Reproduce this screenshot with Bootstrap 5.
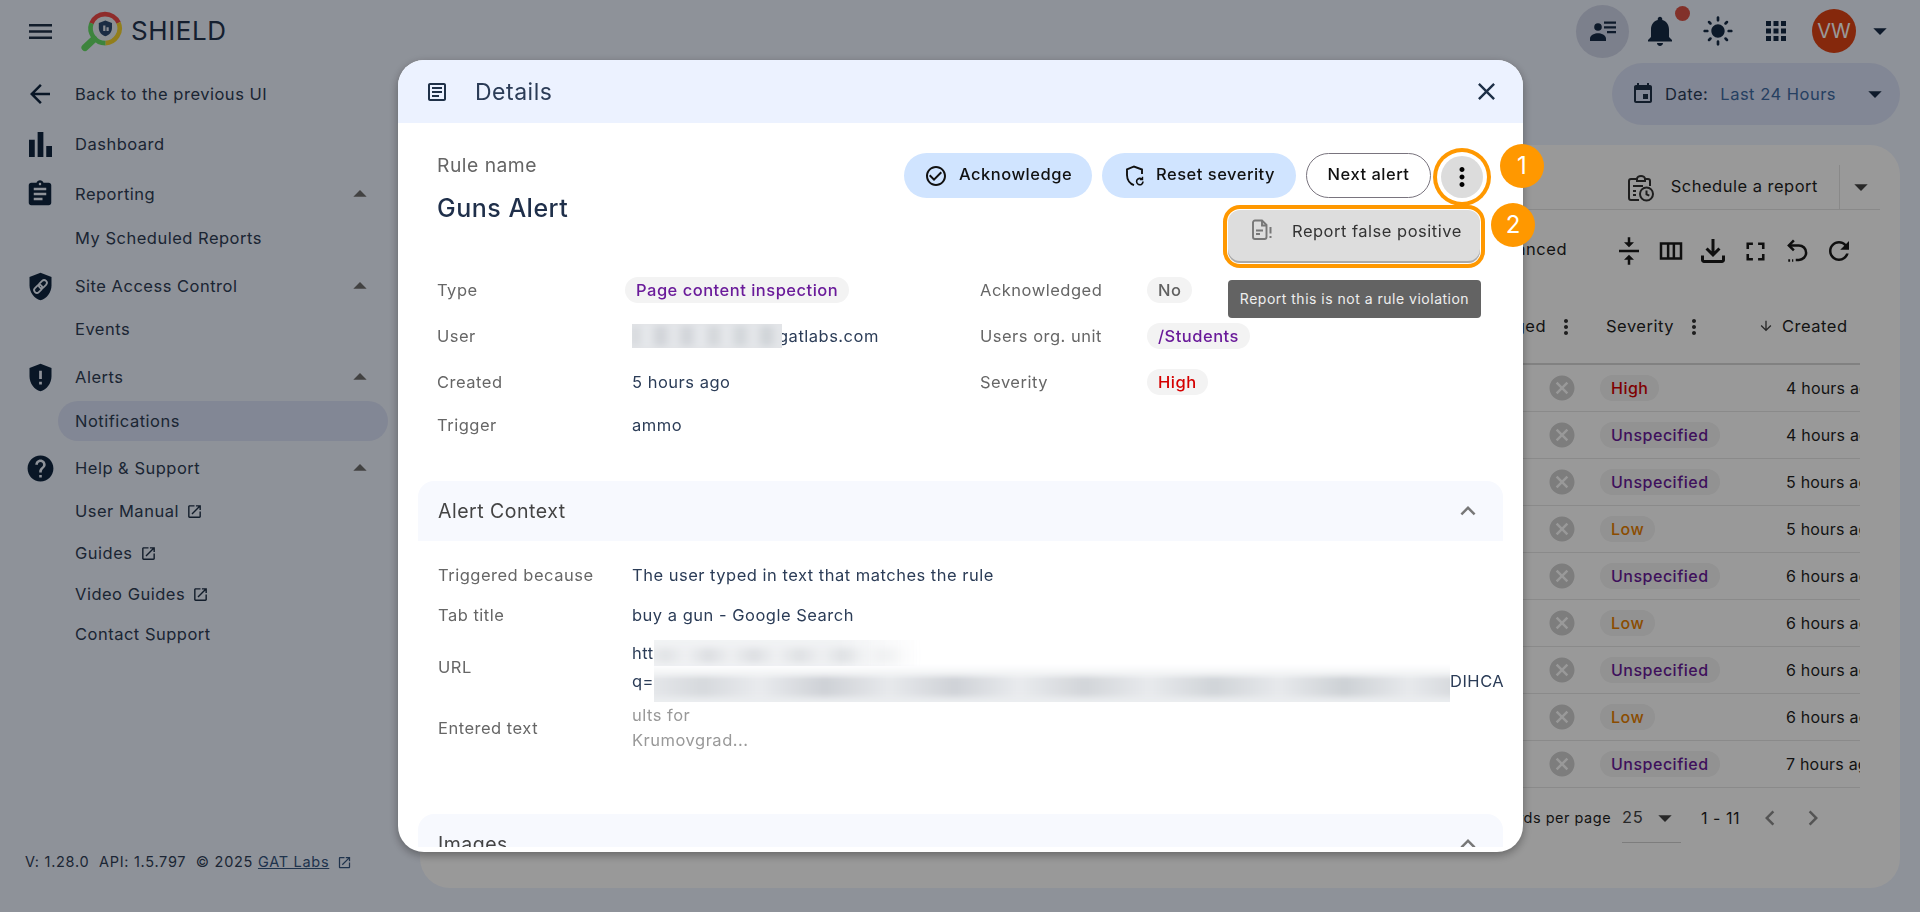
<!DOCTYPE html>
<html lang="en">
<head>
<meta charset="utf-8">
<title>SHIELD - Details</title>
<link href="https://cdn.jsdelivr.net/npm/bootstrap@5.3.0/dist/css/bootstrap.min.css" rel="stylesheet">
<style>
html,body{height:912px;overflow:hidden}
body{font-family:Inter,"Liberation Sans",sans-serif;font-size:16.5px;letter-spacing:.5px;background:#edf3ff;color:#2b3c57}
.ic{fill:currentColor;flex:none;display:block}
.shell{height:912px}
.topbar{height:62px;padding-right:24px;flex:none}
.burger{width:40px;margin-left:20px;color:#1f3148}
.logo{margin-left:18.5px;flex:none}
.brand{font-size:26px;letter-spacing:.6px;color:#24344f;margin-left:8.5px;line-height:1}
.prof{width:53px;height:53px;border-radius:50%;background:#cfd5e9;color:#182c49;margin-right:8px}
.bellb{width:46px;position:relative;color:#152a45}
.dotred{position:absolute;top:-7px;right:-7px;width:15px;height:15px;border-radius:50%;background:#d95347}
.sunb{width:32px;color:#152a45;margin-left:19px}
.gridb{width:30px;color:#152a45;margin-left:27px}
.avatar{width:44px;height:44px;border-radius:50%;background:#de4314;color:#fff;font-size:20px;letter-spacing:0;margin-left:21px}
.cr-top{color:#182c49;margin-left:8px}
.content{min-height:0}
.side{width:420px;padding-top:10px}
.grp{margin-bottom:5px}
.grp-one{margin-bottom:6px}
.nv-main,.nv-sub{display:flex;align-items:center;color:#2f3e56}
.nv-main{height:44px}
.nv-sub{height:42px;padding-left:75px;position:relative}
.nv-sub.short{height:40px}
.nv-sub.first{margin-top:1px}
.nv-ico{width:40px;margin-left:20px;margin-right:15px;display:flex;justify-content:center;color:#0f2640}
.nv-cr{margin-left:auto;margin-right:44px;color:#6f6f6f}
.nv-on{background:#d9e1f8;border-radius:21px;width:330px;margin-left:58px;padding-left:17px;height:40px;margin-top:2px}
.ext{color:#1f3148;margin-left:7px}
.foot{margin-top:auto;padding:0 0 42px 25px;font-size:14.5px;letter-spacing:.72px;color:#303f57;line-height:1;white-space:nowrap}
.foot a{color:#35557f}
.foot .ex2{color:#35557f}
.main-col{min-width:0;padding:1px 20px 24px 0}
.datep{width:288px;height:62px;border-radius:31px;background:#d9e1f8;padding-left:19px}
.datep .cal{color:#1f3148;margin-right:10px}
.datep .lbl{color:#2b3c57;margin-right:12px;font-weight:400}
.datep .val{color:#3f6ba3}
.datep .cr{color:#182c49;margin-left:auto;margin-right:9px}
.sheet{background:#fff;border-radius:30px;margin-top:20px;padding:20px 20px 0;color:#1f1f1f;min-height:0}
.sch{height:45px;border-bottom:1px solid #e4e4e4;flex:none}
.sch-t{margin-top:-2px}
.sch-ic{color:#333;margin-right:17px;margin-top:2px;flex:none}
.sch-div{width:1px;height:45px;background:#e4e4e4;margin:0 5px 0 21px}
.sch-cr{color:#444;margin-right:3px}
.tools{height:82px;padding-right:20px;color:#1f1f1f}
.tools .adv{margin-right:41px;margin-top:-4px}
.tools .tb{width:42px;display:flex;justify-content:center;color:#1a1a1a}
.tbl-wrap{width:640px;overflow:hidden;margin-right:20px}
.grid-t{table-layout:fixed;border-collapse:collapse;width:640px;margin:0}
.grid-t th,.grid-t td{padding:0;white-space:nowrap;overflow:hidden;vertical-align:middle;font-weight:400;background:transparent;box-shadow:none}
.grid-t td{font-size:16px}
.grid-t td.c-c{letter-spacing:.2px}
.grid-t thead tr{height:72px;border-bottom:2px solid #d8d8d8}
.grid-t tbody tr{height:47px;border-bottom:1px solid #e6e6e6}
.grid-t th.c-a{width:370px;text-align:right;padding-right:12px}
.grid-t td.c-a{text-align:right;padding-right:13px}
.grid-t .c-s{width:160px}
.grid-t td.c-s{padding-left:10px}
.grid-t .c-c{width:110px}
.grid-t td.c-c{padding-left:36px}
.hd{display:inline-flex;align-items:center;padding-bottom:2px}
.x-ic{color:#d0d0d0;display:inline-block;vertical-align:middle}
.chp{display:inline-block;height:26px;line-height:26px;border-radius:13px;padding:0 11px;background:#f3f3f3;font-weight:500;white-space:nowrap}
.v-purple{color:#6a1b9a}
.v-red{color:#d50000}
.v-orange{color:#e87f00}
.v-gray{color:#616161}
.pager{height:60px;padding-right:52px;color:#1f1f1f;flex:none}
.pager .rp{font-size:14.5px;margin-right:11px}
.pager .sz{width:59px;height:52px;border-bottom:1px solid #d0d0d0;margin-bottom:2px;color:#444;margin-right:20px;padding-top:14px}
.pager .sz svg{margin-top:-3px}
.pager .cn{margin-right:15px;font-size:16px}
.pager .ch{color:#8d8d8d;margin-right:13px}
.modal.dlg-wrap{overflow:hidden}
.modal-backdrop.show{opacity:.4}
.dlg{max-width:1125px;width:1125px;margin:60px 0 0 398px;position:relative}
.dlg-box{height:792px;border:0;border-radius:26px;overflow:hidden;box-shadow:0 3px 10px rgba(0,0,0,.35);padding-bottom:5px;background:#fff}
.dlg-head{height:63px;background:#ecf2ff;padding:0 22px 0 27px;color:#1f3148;flex:none}
.dlg-head .t{font-size:23px;letter-spacing:.5px;margin:2px 0 0 26px;color:#2b3c57;font-weight:400}
.dlg-body{min-height:0;overflow:hidden;color:#2b3c57}
.top-s{height:144px;padding:30px 40px 0 39px}
.rl{font-size:19.3px;line-height:24px;color:#666}
.rn{font-size:25px;font-weight:500;margin-top:19px;line-height:24px;color:#1f2f4a}
.bt{height:45px;border-radius:23px;border:0;padding:0 0 3px;letter-spacing:.5px;font-weight:500;color:#111;font-size:16.5px;display:flex;align-items:center;margin-right:2px}
.bt svg{margin-top:3px}
.bt-t{background:#d0e4ff}
.bt-o{background:#fff;border:1px solid #79747e}
.w-a{width:188px}
.w-r{width:194px}
.w-n{width:125px}
.m-a{margin:0 11px 0 20px}
.m-r{margin:0 9px 0 21px}
.kb-w{position:relative;width:42px;height:42px;margin-top:3px}
.kb{width:42px;height:42px;border-radius:50%;background:#dcdcdc;box-shadow:0 0 0 4px #fff,0 0 0 8px #ff9800;color:#000}
.mn{position:absolute;top:54px;right:3px;width:252px;height:53px;background:#ddd;border-radius:12px;outline:4px solid #ff9800;outline-offset:1px;box-shadow:inset 0 -2px 0 #aaa;padding:9px 0 0 22px;z-index:3;color:#333;white-space:nowrap}
.mn .fi{color:#777;margin-right:20px}
.tip{position:absolute;top:124px;right:2px;width:253px;height:38px;background:#636363;border-radius:4px;color:#eee;font-size:14px;z-index:3;text-align:center;line-height:38px;white-space:nowrap}
.dtl{display:grid;grid-template-columns:195px 348px 167px 1fr;grid-template-rows:46px 46px 46px 40px;align-items:center;padding-left:39px}
.lb{color:#666}
.shift{margin-left:-7px}
.blur{display:inline-block;vertical-align:middle;position:relative;overflow:hidden;background:#eceef0}
.blur::before{content:"";position:absolute;left:-8px;right:-8px;top:30%;bottom:12%;filter:blur(3px);background:linear-gradient(90deg,#e6e8eb,#d6d9dd 7%,#e9ebee 14%,#ced1d6 22%,#e7e9ec 30%,#cfd2d7 38%,#e9ebee 46%,#d2d5d9 54%,#e8eaed 62%,#d0d4d8 70%,#e7e9ec 78%,#cdd1d5 86%,#e7e9ec 94%,#d5d8dc)}
.blur.u{width:150px;height:24px;margin-right:-4px;background:#e3e5e8}
.blur.u::before{top:10%;bottom:10%}
.blur.l1{width:268px;height:26px;-webkit-mask-image:linear-gradient(90deg,#000 70%,transparent);opacity:.7}
.blur.l2{width:796px;height:38px;margin-top:4px;-webkit-mask-image:linear-gradient(180deg,transparent,#000 40%)}
.sec{margin:36px 20px 0}
.sec-sp{margin-top:61px}
.sec-h{height:60px;background:#f7f9fe;border-radius:16px 16px 0 0;padding:0 20px;color:#444;font-size:19.5px}
.sec-t{margin-top:2px}
.sec-h .e{color:#777;margin-left:auto}
.sec-b{padding:14px 0 0 20px;display:grid;grid-template-columns:194px 1fr;align-items:center}
.sec-b .h4x{height:40px;display:flex;align-items:center}
.u-l{line-height:28px;white-space:nowrap;height:28px;display:flex;align-items:center;overflow:visible}
.ent{line-height:25px;color:#999}
.num{position:absolute;width:44px;height:44px;border-radius:50%;background:#ff9800;color:#fff;font-size:24px;letter-spacing:0;z-index:5}
.n1{top:84px;left:1102px}
.n2{top:143px;left:1093px}
</style>
</head>
<body>
<svg width="0" height="0" class="d-none">
<symbol id="i-menu" viewBox="3 6 18 12" preserveAspectRatio="none"><path d="M3 18h18v-2H3v2zm0-5h18v-2H3v2zm0-7v2h18V6H3z"/></symbol>
<symbol id="i-back" viewBox="0 0 24 24"><path d="M20 11H7.83l5.59-5.59L12 4l-8 8 8 8 1.41-1.41L7.83 13H20v-2z"/></symbol>
<symbol id="i-bar" viewBox="4 4 16 16" preserveAspectRatio="none"><path d="M4 9h4v11H4zm12 4h4v7h-4zm-6-9h4v16h-4z"/></symbol>
<symbol id="i-asg" viewBox="0 0 24 24"><path d="M19 3h-4.18C14.4 1.84 13.3 1 12 1c-1.3 0-2.4.84-2.82 2H5c-1.1 0-2 .9-2 2v14c0 1.1.9 2 2 2h14c1.1 0 2-.9 2-2V5c0-1.1-.9-2-2-2zm-7 0c.55 0 1 .45 1 1s-.45 1-1 1-1-.45-1-1 .45-1 1-1zm2 14H7v-2h7v2zm3-4H7v-2h10v2zm0-4H7V7h10v2z"/></symbol>
<symbol id="i-alert" viewBox="0 0 24 24"><path d="M12 2 4 5v6.09c0 5.05 3.41 9.76 8 10.91 4.59-1.15 8-5.86 8-10.91V5l-8-3zm1 15h-2v-2h2v2zm0-4h-2V7h2v6z"/></symbol>
<symbol id="i-help" viewBox="0 0 24 24"><path d="M12 2C6.48 2 2 6.48 2 12s4.48 10 10 10 10-4.48 10-10S17.52 2 12 2zm1 17h-2v-2h2v2zm2.07-7.75-.9.92C13.45 12.9 13 13.5 13 15h-2v-.5c0-1.1.45-2.1 1.17-2.83l1.24-1.26c.37-.36.59-.86.59-1.41 0-1.1-.9-2-2-2s-2 .9-2 2H8c0-2.21 1.79-4 4-4s4 1.79 4 4c0 .88-.36 1.68-.93 2.25z"/></symbol>
<symbol id="i-ext" viewBox="0 0 24 24"><path d="M19 19H5V5h7V3H5c-1.11 0-2 .9-2 2v14c0 1.1.89 2 2 2h14c1.1 0 2-.9 2-2v-7h-2v7zM14 3v2h3.59l-9.83 9.83 1.41 1.41L19 6.41V10h2V3h-7z"/></symbol>
<symbol id="i-up" viewBox="0 0 24 24"><path d="m7 14 5-5 5 5z"/></symbol>
<symbol id="i-down" viewBox="0 0 24 24"><path d="m7 10 5 5 5-5z"/></symbol>
<symbol id="i-vert" viewBox="0 0 24 24"><path d="M12 8c1.1 0 2-.9 2-2s-.9-2-2-2-2 .9-2 2 .9 2 2 2zm0 2c-1.1 0-2 .9-2 2s.9 2 2 2 2-.9 2-2-.9-2-2-2zm0 6c-1.1 0-2 .9-2 2s.9 2 2 2 2-.9 2-2-.9-2-2-2z"/></symbol>
<symbol id="i-x" viewBox="0 0 24 24"><path d="M12 2C6.47 2 2 6.47 2 12s4.47 10 10 10 10-4.47 10-10S17.53 2 12 2zm5 13.59L15.59 17 12 13.41 8.41 17 7 15.59 10.59 12 7 8.41 8.41 7 12 10.59 15.59 7 17 8.41 13.41 12 17 15.59z"/></symbol>
<symbol id="i-less" viewBox="0 0 24 24"><path d="m12 8-6 6 1.41 1.41L12 10.83l4.59 4.58L18 14z"/></symbol>
</svg>

<div class="shell d-flex flex-column">
  <header class="topbar d-flex align-items-center">
    <div class="burger d-flex justify-content-center"><svg class="ic" width="23" height="15"><use href="#i-menu"/></svg></div>
    <svg class="logo" width="44" height="44" viewBox="0 0 40 40" fill="none" aria-hidden="true">
      <circle cx="24" cy="17.500" r="11" fill="#eaf0f6"/>
      <path d="M24 10.500l6 2.200v4.300c0 3.700-2.500 6.800-6 7.800-3.500-1-6-4.100-6-7.800v-4.300z" fill="#2c4a70"/>
      <path d="M22 15h2v5h-2zM25 16.500h2v3.500h-2z" fill="#e4eaf2"/>
      <path d="M11.300 13A13.500 13.500 0 0 1 36 12.500" stroke="#ee4a48" stroke-width="4.200"/>
      <path d="M36 12.500A13.500 13.500 0 0 1 24 31" stroke="#f3d230" stroke-width="4.200"/>
      <path d="M24 31A13.500 13.500 0 0 1 11.300 13" stroke="#66dd66" stroke-width="4.200"/>
      <path d="M13.500 27.500 5.500 35" stroke="#66dd66" stroke-width="6.500" stroke-linecap="round"/>
    </svg>
    <div class="brand">SHIELD</div>
    <div class="ms-auto d-flex align-items-center">
      <div class="prof d-flex align-items-center justify-content-center">
        <svg class="ic" width="26" height="20" viewBox="0 0 26 20"><circle cx="8" cy="6" r="3.800"/><path d="M0 20v-2.500C0 14 5 12.300 8 12.300s8 1.700 8 5.200V20zM14 .5h12v2.200H14zM14 5.200h12v2.200H14zM17 10h9v2.200h-9z"/></svg>
      </div>
      <div class="bellb d-flex align-items-center justify-content-center">
        <svg class="ic" width="36" height="36" viewBox="0 0 24 24"><path d="M12 22c1.100 0 2-.9 2-2h-4c0 1.100.89 2 2 2zm6-6v-5c0-3.070-1.640-5.640-4.500-6.320V4c0-.83-.67-1.500-1.500-1.500s-1.500.67-1.500 1.500v.68C7.630 5.360 6 7.920 6 11v5l-2 2v1h16v-1l-2-2z"/></svg>
        <span class="dotred"></span>
      </div>
      <div class="sunb d-flex justify-content-center">
        <svg class="ic" width="32" height="32" viewBox="0 0 24 24"><path d="M12 7c-2.760 0-5 2.240-5 5s2.240 5 5 5 5-2.240 5-5-2.240-5-5-5zM2 13h2c.55 0 1-.45 1-1s-.45-1-1-1H2c-.55 0-1 .45-1 1s.45 1 1 1zm18 0h2c.55 0 1-.45 1-1s-.45-1-1-1h-2c-.55 0-1 .45-1 1s.45 1 1 1zM11 2v2c0 .55.45 1 1 1s1-.45 1-1V2c0-.55-.45-1-1-1s-1 .45-1 1zm0 18v2c0 .55.45 1 1 1s1-.45 1-1v-2c0-.55-.45-1-1-1s-1 .45-1 1zM5.990 4.580a.996.996 0 0 0-1.410 0 .996.996 0 0 0 0 1.410l1.060 1.060c.39.39 1.030.39 1.410 0s.39-1.030 0-1.410L5.990 4.580zm12.370 12.370a.996.996 0 0 0-1.410 0 .996.996 0 0 0 0 1.410l1.060 1.060c.39.39 1.030.39 1.410 0a.996.996 0 0 0 0-1.410l-1.060-1.060zm1.060-10.960a.996.996 0 0 0 0-1.410.996.996 0 0 0-1.410 0l-1.060 1.060c-.39.39-.39 1.030 0 1.410s1.030.39 1.410 0l1.060-1.060zM7.050 18.360a.996.996 0 0 0 0-1.410.996.996 0 0 0-1.410 0l-1.060 1.060c-.39.39-.39 1.030 0 1.410s1.030.39 1.410 0l1.060-1.060z"/></svg>
      </div>
      <div class="gridb d-flex justify-content-center">
        <svg class="ic" width="30" height="30" viewBox="0 0 24 24"><path d="M4 8h4V4H4v4zm6 12h4v-4h-4v4zm-6 0h4v-4H4v4zm0-6h4v-4H4v4zm6 0h4v-4h-4v4zm6-10v4h4V4h-4zm-6 4h4V4h-4v4zm6 6h4v-4h-4v4zm0 6h4v-4h-4v4z"/></svg>
      </div>
      <div class="avatar d-flex align-items-center justify-content-center">VW</div>
      <svg class="ic cr-top" width="32" height="32"><use href="#i-down"/></svg>
    </div>
  </header>

  <div class="content d-flex flex-grow-1">
    <nav class="side d-flex flex-column flex-none">
      <div class="grp-one"><a class="nv-main text-decoration-none"><span class="nv-ico"><svg class="ic" width="30" height="30"><use href="#i-back"/></svg></span>Back to the previous UI</a></div>
      <div class="grp-one"><a class="nv-main text-decoration-none"><span class="nv-ico"><svg class="ic" width="23" height="25"><use href="#i-bar"/></svg></span>Dashboard</a></div>
      <div class="grp">
        <a class="nv-main text-decoration-none"><span class="nv-ico"><svg class="ic" width="30" height="30"><use href="#i-asg"/></svg></span>Reporting<svg class="ic nv-cr" width="32" height="32"><use href="#i-up"/></svg></a>
        <a class="nv-sub first text-decoration-none">My Scheduled Reports</a>
      </div>
      <div class="grp">
        <a class="nv-main text-decoration-none"><span class="nv-ico"><svg class="ic" width="33" height="33" viewBox="0 0 24 24"><path d="M12 2 4 5v6.090c0 5.050 3.410 9.760 8 10.910 4.590-1.150 8-5.860 8-10.910V5z"/><g transform="rotate(-45 12 12)" fill="none" stroke="#edf3ff" stroke-width="1.300"><rect x="6.300" y="10" width="6.600" height="4" rx="2"/><rect x="11.100" y="10" width="6.600" height="4" rx="2"/></g></svg></span>Site Access Control<svg class="ic nv-cr" width="32" height="32"><use href="#i-up"/></svg></a>
        <a class="nv-sub text-decoration-none">Events</a>
      </div>
      <div class="grp">
        <a class="nv-main text-decoration-none"><span class="nv-ico"><svg class="ic" width="33" height="33"><use href="#i-alert"/></svg></span>Alerts<svg class="ic nv-cr" width="32" height="32"><use href="#i-up"/></svg></a>
        <a class="nv-sub nv-on text-decoration-none">Notifications</a>
      </div>
      <div class="grp">
        <a class="nv-main text-decoration-none"><span class="nv-ico"><svg class="ic" width="31" height="31"><use href="#i-help"/></svg></span>Help &amp; Support<svg class="ic nv-cr" width="32" height="32"><use href="#i-up"/></svg></a>
        <a class="nv-sub text-decoration-none">User Manual<svg class="ic ext" width="17" height="17"><use href="#i-ext"/></svg></a>
        <a class="nv-sub text-decoration-none">Guides<svg class="ic ext" width="17" height="17"><use href="#i-ext"/></svg></a>
        <a class="nv-sub short text-decoration-none">Video Guides<svg class="ic ext" width="17" height="17"><use href="#i-ext"/></svg></a>
        <a class="nv-sub short text-decoration-none">Contact Support</a>
      </div>
      <div class="foot d-flex align-items-center">V: 1.28.0 &nbsp;API: 1.5.797 &nbsp;© 2025&nbsp;<a href="#">GAT Labs</a><svg class="ic ex2 ms-2" width="15" height="15"><use href="#i-ext"/></svg></div>
    </nav>

    <main class="main-col flex-grow-1 d-flex flex-column">
      <div class="d-flex justify-content-end flex-none">
        <div class="datep d-flex align-items-center">
          <svg class="ic cal" width="24" height="24" viewBox="0 0 24 24"><path d="M17 12h-5v5h5v-5zM16 1v2H8V1H6v2H5c-1.110 0-1.990.9-1.990 2L3 19c0 1.100.89 2 2 2h14c1.100 0 2-.9 2-2V5c0-1.100-.9-2-2-2h-1V1h-2zm3 18H5V8h14v11z"/></svg>
          <span class="lbl">Date:</span><span class="val">Last 24 Hours</span>
          <svg class="ic cr" width="32" height="32"><use href="#i-down"/></svg>
        </div>
      </div>
      <section class="sheet flex-grow-1 d-flex flex-column">
        <div class="sch d-flex align-items-center justify-content-end">
          <svg class="sch-ic" width="26" height="27" viewBox="0 0 26 27" fill="none" stroke="#333" stroke-width="2"><path d="M9 4H3a2 2 0 0 0-2 2v17a2 2 0 0 0 2 2h8M17 4h3a2 2 0 0 1 2 2v5M9 6V4a4 3 0 0 1 8 0v2zM5 11h10M5 16h3M5 20h3"/><circle cx="18.500" cy="19" r="6.500"/><path d="M18.500 15.500v3.800l2.800 1.400"/></svg>
          <span class="sch-t">Schedule a report</span>
          <span class="sch-div"></span>
          <svg class="ic sch-cr" width="32" height="32"><use href="#i-down"/></svg>
        </div>
        <div class="tools d-flex align-items-center justify-content-end flex-none">
          <span class="adv">Advanced</span>
          <span class="tb"><svg class="ic" width="30" height="30" viewBox="0 0 24 24"><path d="M8 19h3v4h2v-4h3l-4-4-4 4zm8-14h-3V1h-2v4H8l4 4 4-4zM4 11v2h16v-2H4z"/></svg></span>
          <span class="tb"><svg class="ic" width="30" height="30" viewBox="0 0 24 24"><path fill-rule="evenodd" d="M3 5h18v14H3zM5 7v10h3.700V7zm5.700 0v10h2.600V7zm4.600 0v10H19V7z"/></svg></span>
          <span class="tb"><svg class="ic" width="36" height="36" viewBox="0 0 24 24"><path d="M18 15v3H6v-3H4v3c0 1.100.9 2 2 2h12c1.100 0 2-.9 2-2v-3h-2zm-1-4-1.410-1.410L13 12.170V4h-2v8.170L8.410 9.590 7 11l5 5 5-5z"/></svg></span>
          <span class="tb"><svg class="ic" width="31" height="31" viewBox="0 0 24 24"><path d="M7 14H5v5h5v-2H7v-3zm-2-4h2V7h3V5H5v5zm12 7h-3v2h5v-5h-2v3zM14 5v2h3v3h2V5h-5z"/></svg></span>
          <span class="tb"><svg width="30" height="30" viewBox="0 0 24 24" fill="none" stroke="currentColor" stroke-width="2"><path d="M9.500 3.500 5.500 7.500l4 4"/><path d="M5.500 7.500h8a5.800 5.800 0 0 1 0 11.600H11"/><path d="M5 19.500h1.500M8 19.500h1"/></svg></span>
          <span class="tb"><svg class="ic" width="30" height="30" viewBox="0 0 24 24"><path d="M17.650 6.350C16.200 4.900 14.210 4 12 4c-4.420 0-7.990 3.580-7.990 8s3.570 8 7.990 8c3.730 0 6.840-2.550 7.730-6h-2.080c-.82 2.330-3.040 4-5.650 4-3.310 0-6-2.690-6-6s2.690-6 6-6c1.660 0 3.140.69 4.220 1.780L13 11h7V4l-2.350 2.350z"/></svg></span>
        </div>
        <div class="d-flex justify-content-end flex-none">
          <div class="tbl-wrap">
            <table class="grid-t">
              <thead>
                <tr>
                  <th class="c-a"><span class="hd">Acknowledged<svg class="ic ms-2" width="24" height="24" color="#333"><use href="#i-vert"/></svg></span></th>
                  <th class="c-s"><span class="hd ms-3">Severity<svg class="ic ms-2" width="24" height="24" color="#333"><use href="#i-vert"/></svg></span></th>
                  <th class="c-c"><span class="hd"><svg class="ic mx-2" width="16" height="16" viewBox="0 0 24 24" color="#444"><path d="M20 12l-1.410-1.410L13 16.170V4h-2v12.170l-5.580-5.590L4 12l8 8 8-8z"/></svg>Created</span></th>
                </tr>
              </thead>
              <tbody>
                <tr><td class="c-a"><svg class="ic x-ic" width="30" height="30"><use href="#i-x"/></svg></td><td class="c-s"><span class="chp v-red">High</span></td><td class="c-c">4 hours ago</td></tr>
                <tr><td class="c-a"><svg class="ic x-ic" width="30" height="30"><use href="#i-x"/></svg></td><td class="c-s"><span class="chp v-purple">Unspecified</span></td><td class="c-c">4 hours ago</td></tr>
                <tr><td class="c-a"><svg class="ic x-ic" width="30" height="30"><use href="#i-x"/></svg></td><td class="c-s"><span class="chp v-purple">Unspecified</span></td><td class="c-c">5 hours ago</td></tr>
                <tr><td class="c-a"><svg class="ic x-ic" width="30" height="30"><use href="#i-x"/></svg></td><td class="c-s"><span class="chp v-orange">Low</span></td><td class="c-c">5 hours ago</td></tr>
                <tr><td class="c-a"><svg class="ic x-ic" width="30" height="30"><use href="#i-x"/></svg></td><td class="c-s"><span class="chp v-purple">Unspecified</span></td><td class="c-c">6 hours ago</td></tr>
                <tr><td class="c-a"><svg class="ic x-ic" width="30" height="30"><use href="#i-x"/></svg></td><td class="c-s"><span class="chp v-orange">Low</span></td><td class="c-c">6 hours ago</td></tr>
                <tr><td class="c-a"><svg class="ic x-ic" width="30" height="30"><use href="#i-x"/></svg></td><td class="c-s"><span class="chp v-purple">Unspecified</span></td><td class="c-c">6 hours ago</td></tr>
                <tr><td class="c-a"><svg class="ic x-ic" width="30" height="30"><use href="#i-x"/></svg></td><td class="c-s"><span class="chp v-orange">Low</span></td><td class="c-c">6 hours ago</td></tr>
                <tr><td class="c-a"><svg class="ic x-ic" width="30" height="30"><use href="#i-x"/></svg></td><td class="c-s"><span class="chp v-purple">Unspecified</span></td><td class="c-c">7 hours ago</td></tr>
              </tbody>
            </table>
          </div>
        </div>
        <div class="pager d-flex align-items-center justify-content-end">
          <span class="rp">Records per page</span>
          <div class="sz d-flex align-items-start">25<svg class="ic ms-auto" width="32" height="32"><use href="#i-down"/></svg></div>
          <span class="cn">1 - 11</span>
          <svg class="ic ch" width="30" height="30" viewBox="0 0 24 24"><path d="M15.410 7.410 14 6l-6 6 6 6 1.410-1.410L10.830 12z"/></svg>
          <svg class="ic ch m-0" width="30" height="30" viewBox="0 0 24 24"><path d="M10 6 8.590 7.410 13.170 12l-4.580 4.590L10 18l6-6z"/></svg>
        </div>
      </section>
    </main>
  </div>
</div>

<div class="modal-backdrop show"></div>
<div class="modal d-block dlg-wrap">
  <div class="modal-dialog dlg">
    <div class="modal-content dlg-box d-flex flex-column">
      <div class="dlg-head d-flex align-items-center">
        <svg class="ic" width="24" height="24" viewBox="0 0 24 24"><path d="M19 5v14H5V5h14m0-2H5c-1.100 0-2 .9-2 2v14c0 1.100.9 2 2 2h14c1.100 0 2-.9 2-2V5c0-1.100-.9-2-2-2z"/><path d="M14 17H7v-2h7v2zm3-4H7v-2h10v2zm0-4H7V7h10v2z"/></svg>
        <div class="t">Details</div>
        <svg class="ic ms-auto" width="29" height="29" viewBox="0 0 24 24"><path d="M19 6.410 17.590 5 12 10.590 6.410 5 5 6.410 10.590 12 5 17.590 6.410 19 12 13.410 17.590 19 19 17.590 13.410 12z"/></svg>
      </div>
      <div class="dlg-body flex-grow-1">
        <div class="top-s d-flex justify-content-between">
          <div>
            <div class="rl">Rule name</div>
            <div class="rn">Guns Alert</div>
          </div>
          <div class="d-flex align-items-start gap-2">
            <button class="bt bt-t w-a"><svg class="ic m-a" width="24" height="24" viewBox="0 0 24 24"><path d="M16.590 7.580 10 14.170l-3.590-3.580L5 12l5 5 8-8zM12 2C6.480 2 2 6.480 2 12s4.480 10 10 10 10-4.480 10-10S17.520 2 12 2zm0 18c-4.420 0-8-3.580-8-8s3.580-8 8-8 8 3.580 8 8-3.580 8-8 8z"/></svg>Acknowledge</button>
            <button class="bt bt-t w-r"><svg class="m-r" width="24" height="24" viewBox="0 0 24 24" fill="none" stroke="currentColor" stroke-width="1.900"><path d="M19 10V5.500L11 2.500 4 5.500v5.600c0 4.700 3 8.700 7 10"/><path d="M20 17.500a3.200 3.200 0 1 1-1-2.300" stroke-width="1.600"/><path d="M19.500 12.800v2.700h-2.700" stroke-width="1.400"/></svg>Reset severity</button>
            <button class="bt bt-o justify-content-center w-n">Next alert</button>
            <div class="kb-w">
              <div class="kb d-flex align-items-center justify-content-center"><svg class="ic" width="30" height="30"><use href="#i-vert"/></svg></div>
              <div class="mn d-flex align-items-start">
                <svg class="fi flex-none" width="22" height="22" viewBox="0 0 22 22" fill="none" stroke="currentColor" stroke-width="1.900"><path d="M3 3.500a2 2 0 0 1 2-2h7l4.500 4.500v12a2 2 0 0 1-2 2H5a2 2 0 0 1-2-2z"/><path d="M12 1.500v5h4.500M6 11.500h7M6 15h4"/><path d="M20.500 8v6.500M20.500 17v2" stroke-width="2"/></svg>
                <span>Report false positive</span>
              </div>
              <div class="tip">Report this is not a rule violation</div>
            </div>
          </div>
        </div>
        <div class="dtl">
          <div class="lb">Type</div><div><span class="chp v-purple shift">Page content inspection</span></div>
          <div class="lb">Acknowledged</div><div><span class="chp v-gray">No</span></div>
          <div class="lb">User</div><div class="d-flex align-items-center"><span class="blur u"></span>gatlabs.com</div>
          <div class="lb">Users org. unit</div><div><span class="chp v-purple">/Students</span></div>
          <div class="lb">Created</div><div>5 hours ago</div>
          <div class="lb">Severity</div><div><span class="chp v-red">High</span></div>
          <div class="lb">Trigger</div><div>ammo</div>
        </div>
        <div class="sec">
          <div class="sec-h d-flex align-items-center"><span class="sec-t">Alert Context</span><svg class="ic e" width="30" height="30"><use href="#i-less"/></svg></div>
          <div class="sec-b">
            <div class="lb h4x">Triggered because</div><div class="h4x">The user typed in text that matches the rule</div>
            <div class="lb h4x">Tab title</div><div class="h4x">buy a gun - Google Search</div>
            <div class="lb mt-1">URL</div>
            <div class="mt-1">
              <div class="u-l">htt<span class="blur l1"></span></div>
              <div class="u-l">q=<span class="blur l2"></span>DIHCA</div>
            </div>
            <div class="lb mt-2">Entered text</div>
            <div class="ent mt-2">ults for<br>Krumovgrad...</div>
          </div>
        </div>
        <div class="sec sec-sp">
          <div class="sec-h d-flex align-items-center"><span class="sec-t">Images</span><svg class="ic e" width="30" height="30"><use href="#i-less"/></svg></div>
        </div>
      </div>
    </div>
    <div class="num n1 d-flex align-items-center justify-content-center">1</div>
    <div class="num n2 d-flex align-items-center justify-content-center">2</div>
  </div>
</div>
<script src="https://cdn.jsdelivr.net/npm/bootstrap@5.3.0/dist/js/bootstrap.bundle.min.js"></script>
</body>
</html>
